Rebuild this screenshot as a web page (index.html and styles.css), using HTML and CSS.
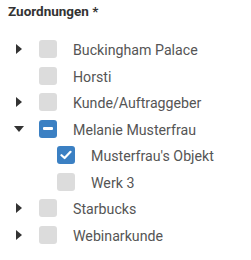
FILE: index.html
```html
<!DOCTYPE html>
<html>
<head>
<meta charset="utf-8">
<link rel="stylesheet" href="styles.css">
</head>
<body>
<div class="panel">
  <div class="title">Zuordnungen *</div>
  <ul class="tree">
    <li class="row"><span class="arrow right"></span><span class="cb"></span><span class="label">Buckingham Palace</span></li>
    <li class="row"><span class="arrow"></span><span class="cb"></span><span class="label">Horsti</span></li>
    <li class="row"><span class="arrow right"></span><span class="cb"></span><span class="label">Kunde/Auftraggeber</span></li>
    <li class="row"><span class="arrow down"></span><span class="cb partial"><span class="dash"></span></span><span class="label">Melanie Musterfrau</span></li>
    <li class="row child"><span class="cb checked"><svg width="12" height="10" viewBox="0 0 12 10"><path d="M1.5 5.2 L4.6 8 L10.5 1.8" fill="none" stroke="#fff" stroke-width="2.2" stroke-linecap="round" stroke-linejoin="round"/></svg></span><span class="label">Musterfrau's Objekt</span></li>
    <li class="row child"><span class="cb"></span><span class="label">Werk 3</span></li>
    <li class="row"><span class="arrow right"></span><span class="cb"></span><span class="label">Starbucks</span></li>
    <li class="row"><span class="arrow right"></span><span class="cb"></span><span class="label">Webinarkunde</span></li>
  </ul>
</div>
</body>
</html>
```
FILE: styles.css
```css
html, body {
  margin: 0;
  padding: 0;
  background: #fff;
}
body {
  font-family: Roboto, "Liberation Sans", sans-serif;
}
.panel {
  padding: 3px 0 0 8px;
}
.title {
  font-size: 13.5px;
  font-weight: bold;
  color: #333;
  line-height: 16px;
}
.tree {
  list-style: none;
  margin: 0;
  padding: 17px 0 0 8px;
}
.row {
  display: flex;
  align-items: center;
  height: 26.5px;
}
.arrow {
  width: 23px;
  height: 10px;
  flex: none;
  position: relative;
}
.arrow.right::before {
  content: "";
  position: absolute;
  left: 0;
  top: 0;
  border-top: 5px solid transparent;
  border-bottom: 5px solid transparent;
  border-left: 6px solid #333;
}
.arrow.down::before {
  content: "";
  position: absolute;
  left: -2px;
  top: 2px;
  border-left: 5px solid transparent;
  border-right: 5px solid transparent;
  border-top: 6px solid #333;
}
.child {
  padding-left: 41px;
}
.cb {
  width: 18px;
  height: 18px;
  border-radius: 3px;
  background: #dcdcdc;
  flex: none;
  display: flex;
  align-items: center;
  justify-content: center;
}
.cb.partial, .cb.checked {
  background: #3b80c3;
}
.dash {
  width: 10px;
  height: 3px;
  border-radius: 1px;
  background: #fff;
}
.label {
  margin-left: 16px;
  font-size: 14.2px;
  color: #555;
  white-space: nowrap;
  position: relative;
  top: 1px;
}
```
